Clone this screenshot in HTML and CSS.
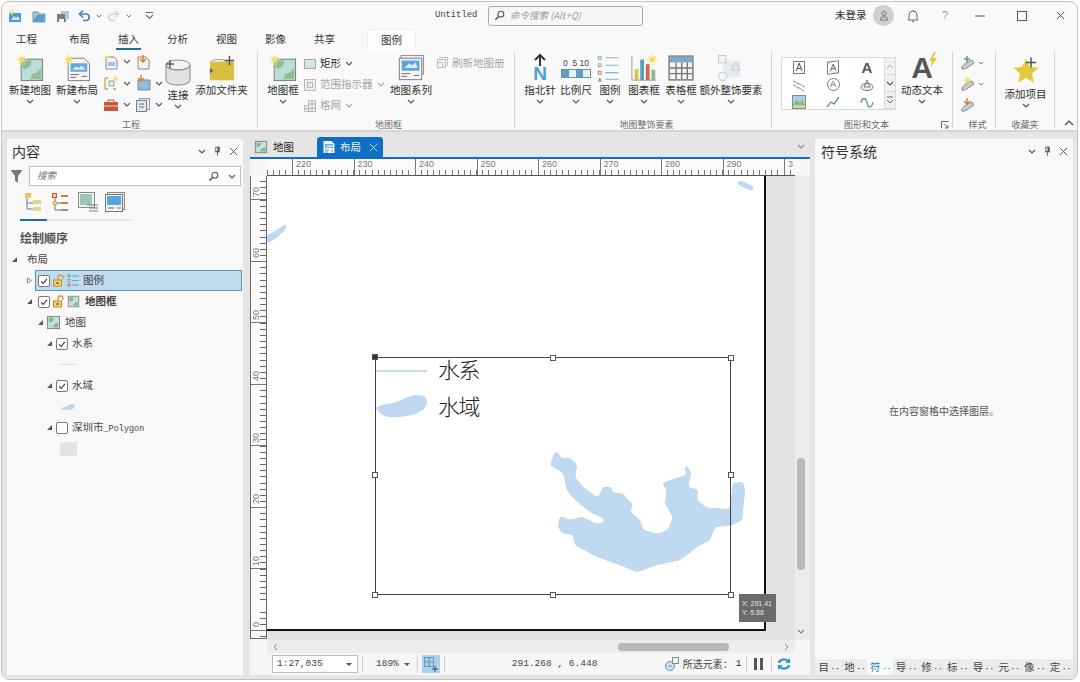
FILE: index.html
```html
<!DOCTYPE html>
<html lang="zh">
<head>
<meta charset="utf-8">
<title>Untitled</title>
<link rel="stylesheet" href="styles.css">
</head>
<body>
<svg class="sprite" xmlns="http://www.w3.org/2000/svg">
  <symbol id="sun" viewBox="0 0 12 12"><circle cx="6" cy="6" r="3.2" fill="#f3dc6c"/><path stroke="#f3dc6c" d="M6 0v2M6 10v2M0 6h2M10 6h2M2 2l1.5 1.5M8.500 8.500L10 10M10 2L8.500 3.500M2 10l1.500-1.500"/></symbol>
  <symbol id="map" viewBox="0 0 30 30"><rect x="5.500" y="5.500" width="23" height="23" fill="#bcdcd8" stroke="#777"/><path d="M7 7h10l-2 6-5 3-3-1zM27 15v12H15l3-6 4-1z" fill="#8fbe92"/><use href="#sun" x="0" y="0" width="12" height="12"/></symbol>
  <symbol id="mapflat" viewBox="0 0 16 16"><rect x="1.500" y="1.500" width="13" height="13" fill="#c4dfd8" stroke="#808080"/><path d="M3 3h5L7 7 3 8zM13 8v5H7l2-3z" fill="#82b68c"/></symbol>
  <symbol id="layout" viewBox="0 0 30 30"><path d="M5.500 4.500h17l6 6v18h-23z" fill="#f5f5f5" stroke="#777"/><path d="M8 10h18v9H8z" fill="#63a9dc"/><path d="M10 17l4-4 3 2 3-3 4 5z" fill="#d6ecf8"/><path d="M8 22h9M8 25h6M20 24h6" stroke="#666"/><use href="#sun" x="0" y="0" width="12" height="12"/></symbol>
  <symbol id="series" viewBox="0 0 30 30"><rect x="4.500" y="1.500" width="24" height="20" fill="#eee" stroke="#888"/><rect x="2.500" y="4.500" width="24" height="23" fill="#f6f6f6" stroke="#777"/><path d="M5 7h19v11H5z" fill="#5aa6dc"/><path d="M8 15l5-5 3 2 4-3 2 6z" fill="#d8eef9"/><path d="M5 21h9M5 24h6M18 23h6" stroke="#666"/></symbol>
  <symbol id="chev" viewBox="0 0 8 5"><path d="M1 1l3 3 3-3" fill="none" stroke="#555" stroke-width="1.100"/></symbol>
  <symbol id="tri" viewBox="0 0 7 7"><path d="M6 1v5H1z" fill="#555"/></symbol>
  <symbol id="check" viewBox="0 0 12 12"><path d="M2.500 6.500l2.500 2.500 4.500-5.500" fill="none" stroke="#333" stroke-width="1.300"/></symbol>
  <symbol id="lock" viewBox="0 0 13 13"><path d="M6 6V3.500a2.500 2.500 0 015 0V5" fill="none" stroke="#d89a3c" stroke-width="1.300"/><rect x="1.500" y="6" width="8" height="6" fill="#f4cf72" stroke="#c8862a"/><rect x="4.500" y="8" width="2" height="2" fill="#8a5a14"/></symbol>
  <symbol id="list" viewBox="0 0 13 13"><g fill="none" stroke="#6b9fc6"><rect x="1" y="1" width="2" height="2"/><rect x="1" y="5.500" width="2" height="2" stroke="#7cab7c"/><rect x="1" y="10" width="2" height="2" stroke="#c77"/><path d="M5 2h7M5 6.500h7M5 11h7"/></g></symbol>
  <symbol id="x" viewBox="0 0 10 10"><path d="M1 1l8 8M9 1l-8 8" stroke="currentColor" stroke-width="1.100" fill="none"/></symbol>
  <symbol id="pin" viewBox="0 0 8 11"><path d="M2 1h4v5H2zM1 6.500h6M4 7v4" stroke="#555" fill="none"/><path d="M4 1h2v5H4z" fill="#555"/></symbol>
  <symbol id="search" viewBox="0 0 12 12"><circle cx="7.500" cy="4.500" r="3.200" fill="none" stroke="#555" stroke-width="1.200"/><path d="M5 7l-3.500 3.500" stroke="#555" stroke-width="1.600"/></symbol>
  <symbol id="grid-t" viewBox="0 0 20 20"><rect x="1.500" y="1.500" width="17" height="17" fill="#f4f4f4" stroke="#777"/><path d="M2 2h16v4H2z" fill="#7fa8c9"/><path d="M2 10h16M2 14h16M6.500 6v12M10.500 6v12M14.500 6v12" stroke="#777"/></symbol>
</svg>

<div class="window">
  <header class="titlebar">
    <div class="qat">
      <svg class="qi" viewBox="0 0 14 14"><path d="M1 4h12v9H1z" fill="#4f9ad0"/><path d="M3 11l3-4 2 2 2-2 2 4z" fill="#cfe8f5"/><use href="#sun" x="0" y="0" width="7" height="7"/></svg>
      <svg class="qi q2" viewBox="0 0 14 14"><path d="M1 3h5l1 2h6v8H1z" fill="#a6c6dc" stroke="#6c93ae"/><path d="M3 9l2-3h8l-2 7H1z" fill="#5d9cc8"/></svg>
      <svg class="qi q3" viewBox="0 0 14 14"><path d="M1 5h9v8H1z" fill="#6f7f92"/><path d="M3 10h5v3H3z" fill="#f2f2f2"/><path d="M5 2h8v8H9V5H5z" fill="#a8c8df"/></svg>
      <svg class="qu" viewBox="0 0 13 13"><path d="M3 5h5.500a3.300 3.300 0 010 6.500H5" fill="none" stroke="#3f88bd" stroke-width="1.700"/><path d="M5 1.500L1.500 5 5 8.500" fill="none" stroke="#3f88bd" stroke-width="1.700"/></svg>
      <svg class="cv cv1"><use href="#chev"/></svg>
      <svg class="qu q5" viewBox="0 0 13 13"><path d="M10 5H4.500a3.300 3.300 0 000 6.500H8" fill="none" stroke="#c9d9e5" stroke-width="1.600"/><path d="M8 1.500L11.500 5 8 8.500" fill="none" stroke="#c9d9e5" stroke-width="1.600"/></svg>
      <svg class="cv cv2"><use href="#chev"/></svg>
      <svg class="qc" viewBox="0 0 9 9"><path d="M1 1.500h7M1 4l3.500 3.500L8 4" fill="none" stroke="#666" stroke-width="1.100"/></svg>
    </div>
    <span class="doc-name">Untitled</span>
    <div class="cmd-search">
      <svg class="cmd-ic"><use href="#search"/></svg>
      <span>命令搜索 (Alt+Q)</span>
    </div>
    <div class="title-right">
      <span class="login">未登录</span>
      <span class="avatar"><svg viewBox="0 0 10 11"><circle cx="5" cy="3.500" r="2" fill="none" stroke="#777"/><path d="M1.500 10V8.500c0-1 1-1.500 3.500-1.500s3.500.5 3.500 1.500V10z" fill="none" stroke="#777"/></svg></span>
      <svg class="bell" viewBox="0 0 12 14"><path d="M2 10V6a4 4 0 018 0v4l1 1H1zM6 1v1M5 12.500h2" fill="none" stroke="#666"/></svg>
      <span class="help">?</span>
      <svg class="wbtn wb1" viewBox="0 0 10 10"><path d="M0 5h10" stroke="#555"/></svg>
      <svg class="wbtn wb2" viewBox="0 0 10 10"><rect x=".5" y=".5" width="9" height="9" fill="none" stroke="#555"/></svg>
      <svg class="wbtn wb3"><use href="#x"/></svg>
    </div>
  </header>

  <nav class="tabs">
    <span class="tab first">工程</span><span class="tab">布局</span><span class="tab active">插入</span><span class="tab">分析</span><span class="tab">视图</span><span class="tab">影像</span><span class="tab">共享</span>
    <span class="tab ctx">图例</span>
  </nav>

  <section class="ribbon">
    <div class="group g1">
      <div class="gbody">
        <div class="big w50"><svg class="bi"><use href="#map"/></svg><span>新建地图</span><svg class="cv"><use href="#chev"/></svg></div>
        <div class="big w44"><svg class="bi"><use href="#layout"/></svg><span>新建布局</span><svg class="cv"><use href="#chev"/></svg></div>
        <div class="smallgrid">
          <div class="sg"><svg class="si" viewBox="0 0 16 16"><path d="M3 3h8l3 3v9H3z" fill="#f3f3f3" stroke="#888"/><path d="M5 8h7v4H5z" fill="#9cc6e2"/><use href="#sun" width="7" height="7"/></svg><svg class="cv"><use href="#chev"/></svg></div>
          <div class="sg"><svg class="si" viewBox="0 0 16 16"><path d="M3 3h8l3 3v9H3z" fill="#f1f1f1" stroke="#888"/><path d="M8 1v6M5 5l3 3 3-3" stroke="#d9822b" fill="none" stroke-width="1.500"/></svg></div>
          <div class="sg"><svg class="si" viewBox="0 0 16 16"><path d="M2 3h3M2 3v11M2 14h3M10 14h3" stroke="#c9a73a" fill="none" stroke-width="1.300"/><path d="M6 6h5v5H6z" fill="#e9f1f6" stroke="#7aa0bc"/><use href="#sun" x="9" y="0" width="7" height="7"/></svg><svg class="cv"><use href="#chev"/></svg></div>
          <div class="sg"><svg class="si" viewBox="0 0 16 16"><path d="M3 5h12v10H3z" fill="#8ebfe0" stroke="#888"/><path d="M6 0v6M3 3l3 3 3-3" stroke="#d9822b" fill="none" stroke-width="1.500"/></svg><svg class="cv"><use href="#chev"/></svg></div>
          <div class="sg"><svg class="si" viewBox="0 0 16 16"><path d="M1 5h14v9H1z" fill="#c8563a"/><path d="M5 5V3h6v2" fill="none" stroke="#a54"/><path d="M1 9h14" stroke="#f2d2c4"/></svg><svg class="cv"><use href="#chev"/></svg></div>
          <div class="sg"><svg class="si" viewBox="0 0 16 16"><rect x="4.500" y="1.500" width="10" height="11" fill="#eee" stroke="#8a97a2"/><rect x="1.500" y="3.500" width="10" height="11" fill="#dfe8ee" stroke="#75838e"/><path d="M4 7h5M4 10h5" stroke="#6a7a88"/></svg><svg class="cv"><use href="#chev"/></svg></div>
        </div>
        <div class="big w36 low"><svg class="bi bi-db" viewBox="0 0 28 28"><ellipse cx="14" cy="7" rx="12" ry="5" fill="#f5f5f5" stroke="#888"/><path d="M2 7v15c0 3 5 5 12 5s12-2 12-5V7c0 3-5 5-12 5S2 10 2 7z" fill="#e2e2e2" stroke="#888"/><path d="M6 2v8M2 6h8" stroke="#555" stroke-width="1.400"/></svg><span>连接</span><svg class="cv"><use href="#chev"/></svg></div>
        <div class="big w51"><svg class="bi" viewBox="0 0 30 30"><path d="M2 8h9c2-3 8-3 10 0h7v20H2z" fill="#d9bf3f"/><path d="M3 8c4-3 14-3 18 0" fill="#f5f5f5" stroke="#999"/><path d="M23 2v10M18 7h10" stroke="#555" stroke-width="1.600"/><path d="M2 15l4 3-4 3z" fill="#4a6a78"/></svg><span>添加文件夹</span></div>
      </div>
      <div class="glabel">工程</div>
    </div>

    <div class="group g2">
      <div class="gbody">
        <div class="big w40"><svg class="bi"><use href="#map"/></svg><span>地图框</span><svg class="cv"><use href="#chev"/></svg></div>
        <div class="smallcol">
          <div class="srow"><svg class="si2" viewBox="0 0 14 14"><rect x="1.500" y="2.500" width="11" height="9" fill="#d5e7d8" stroke="#888" stroke-dasharray="2 1"/></svg><span>矩形</span><svg class="cv"><use href="#chev"/></svg></div>
          <div class="srow off"><svg class="si2" viewBox="0 0 14 14"><rect x="1.500" y="1.500" width="11" height="11" fill="#ececec" stroke="#bbb"/><rect x="4.500" y="4.500" width="5" height="5" fill="none" stroke="#bbb"/></svg><span>范围指示器</span><svg class="cv"><use href="#chev"/></svg></div>
          <div class="srow off"><svg class="si2" viewBox="0 0 14 14"><path d="M1.500 12.500V6.500h4V1.500h7v11zM5.500 6.500v6M9 1.500v11M1.500 9.500h11M5.500 5h7" fill="#eee" stroke="#bbb"/></svg><span>格网</span><svg class="cv"><use href="#chev"/></svg></div>
        </div>
        <div class="big w42"><svg class="bi"><use href="#series"/></svg><span>地图系列</span><svg class="cv"><use href="#chev"/></svg></div>
        <div class="refresh"><svg class="si2" viewBox="0 0 14 14"><rect x="4.500" y="1.500" width="8" height="8" fill="#f2f2f2" stroke="#c4c4c4"/><rect x="2.500" y="3.500" width="8" height="8" fill="#f2f2f2" stroke="#c4c4c4"/><circle cx="5" cy="9" r="3" fill="#f4f4f4" stroke="#bbb"/></svg><span>刷新地图册</span></div>
      </div>
      <div class="glabel">地图框</div>
    </div>

    <div class="group g3">
      <div class="gbody">
        <div class="big w36"><div class="bi north"><svg viewBox="0 0 14 12"><path d="M7 12V2M2 6l5-5 5 5" fill="none" stroke="#333" stroke-width="2"/></svg><b>N</b></div><span>指北针</span><svg class="cv"><use href="#chev"/></svg></div>
        <div class="big w36"><div class="bi scale"><div class="scale-n">0&nbsp;&nbsp;5&nbsp;10</div><div class="scale-b"><i></i><i></i><i></i><i></i></div></div><span>比例尺</span><svg class="cv"><use href="#chev"/></svg></div>
        <div class="big w32"><svg class="bi" viewBox="0 0 30 30"><g fill="none"><rect x="2.500" y="2.500" width="3" height="3" stroke="#6aa7d0"/><rect x="2.500" y="10.500" width="3" height="3" stroke="#7fb27f"/><rect x="2.500" y="18.500" width="3" height="3" stroke="#d0705c"/><path d="M2.500 29l1.500-3 1.500 3z" stroke="#777"/><path d="M10 4h14M10 12h14M10 20h14M10 27h14" stroke="#7db4da" stroke-width="1.200"/></g></svg><span>图例</span><svg class="cv"><use href="#chev"/></svg></div>
        <div class="big w36"><svg class="bi" viewBox="0 0 30 30"><path d="M2 2v26h26" fill="none" stroke="#999"/><path d="M5 16h4v12H5z" fill="#d7c544"/><path d="M11 6h4v22h-4z" fill="#5b9dc9"/><path d="M17 11h4v17h-4z" fill="#c56a45"/><path d="M23 17h4v11h-4z" fill="#8ab98e"/><use href="#sun" x="18" y="0" width="12" height="12"/></svg><span>图表框</span><svg class="cv"><use href="#chev"/></svg></div>
        <div class="big w38"><svg class="bi"><use href="#grid-t"/></svg><span>表格框</span><svg class="cv"><use href="#chev"/></svg></div>
        <div class="big w62"><svg class="bi bi-ex" viewBox="0 0 30 30"><path d="M7 7h18v18H7z" fill="#e3ebf2"/><rect x="1.500" y="1.500" width="8" height="8" fill="#f4f4f4" stroke="#c4c4c4"/><circle cx="6" cy="24" r="4.500" fill="#f4f4f4" stroke="#c4c4c4"/><path d="M20 9l5 8H15z" fill="#e3ebf2" stroke="#c4c4c4"/></svg><span>额外整饰要素</span><svg class="cv"><use href="#chev"/></svg></div>
      </div>
      <div class="glabel">地图整饰要素</div>
    </div>

    <div class="group g4">
      <div class="gbody">
        <div class="gallery">
          <div class="gal-cells">
            <span class="gc"><b class="boxA">A</b></span>
            <span class="gc"><b class="boxA slant">A</b></span>
            <span class="gc"><b class="bigA">A</b></span>
            <span class="gc"><svg viewBox="0 0 14 14"><path d="M1 3c3 0 3 3 6 3s3 3 6 3M1 7c3 0 3 3 6 3s2 3 5 3" fill="none" stroke="#888"/></svg></span>
            <span class="gc"><b class="circA">A</b></span>
            <span class="gc"><svg viewBox="0 0 14 14"><ellipse cx="7" cy="9" rx="6" ry="3.500" fill="#f2efe4" stroke="#777"/><path d="M7 2L4 9h6z" fill="none" stroke="#777"/></svg></span>
            <span class="gc"><svg viewBox="0 0 14 14"><rect x=".5" y=".5" width="13" height="13" fill="#a6d0e8" stroke="#888"/><path d="M1 10l4-5 3 3 2-3 3 5z" fill="#88b77a"/><path d="M1 11h12v2H1z" fill="#e6d67a"/></svg></span>
            <span class="gc"><svg viewBox="0 0 14 14"><path d="M1 12l4-5 3 2 5-7" fill="none" stroke="#5e9f6e" stroke-width="1.300"/></svg></span>
            <span class="gc"><svg viewBox="0 0 14 14"><path d="M1 8c1-6 5-6 6 0s5 5 6-1" fill="none" stroke="#5e9f6e" stroke-width="1.300"/></svg></span>
          </div>
          <div class="gal-bar">
            <span class="gb"><svg viewBox="0 0 8 5"><path d="M1 4l3-3 3 3" fill="none" stroke="#aaa"/></svg></span>
            <span class="gb"><svg><use href="#chev"/></svg></span>
            <span class="gb"><svg viewBox="0 0 8 8"><path d="M1 1h6M1 4l3 3 3-3" fill="none" stroke="#666"/></svg></span>
          </div>
        </div>
        <div class="big w52"><div class="bi dyn"><b>A</b><svg viewBox="0 0 10 16"><path d="M6 0L1 9h3l-2 7 7-10H5l3-6z" fill="#e7c93d"/></svg></div><span>动态文本</span><svg class="cv"><use href="#chev"/></svg></div>
      </div>
      <div class="glabel">图形和文本<svg class="launcher" viewBox="0 0 8 8"><path d="M.5 7.500V.5h7M3 3l4 4M7 4v3H4" fill="none" stroke="#666"/></svg></div>
    </div>

    <div class="group g5">
      <div class="gbody stylecol">
        <div class="st"><svg class="si" viewBox="0 0 16 16"><path d="M2 14c-1-3 3-6 10-9l2 3c-6 4-9 7-12 6z" fill="#c5cdd4" stroke="#888"/><path d="M7 1v6M4 4h6" stroke="#5d9f5d" stroke-width="1.500"/></svg><svg class="cv"><use href="#chev"/></svg></div>
        <div class="st"><svg class="si" viewBox="0 0 16 16"><path d="M2 14c-1-3 3-6 10-9l2 3c-6 4-9 7-12 6z" fill="#c5cdd4" stroke="#888"/><use href="#sun" x="3" y="0" width="9" height="9"/></svg><svg class="cv"><use href="#chev"/></svg></div>
        <div class="st"><svg class="si" viewBox="0 0 16 16"><path d="M2 14c-1-3 3-6 10-9l2 3c-6 4-9 7-12 6z" fill="#c5cdd4" stroke="#888"/><path d="M7 1v6M4 4l3 3 3-3" stroke="#d9822b" stroke-width="1.500" fill="none"/></svg></div>
      </div>
      <div class="glabel">样式</div>
    </div>

    <div class="group g6">
      <div class="gbody">
        <div class="big w59 low"><svg class="bi bi-star" viewBox="0 0 30 30"><path d="M15 3l3.700 8.300 9 .9-6.800 6 2 8.800L15 22.400 7.100 27l2-8.800-6.800-6 9-.9z" fill="#e3c93f"/><path d="M20 2v10M15 7h10" stroke="#555" stroke-width="1.500"/></svg><span>添加项目</span><svg class="cv"><use href="#chev"/></svg></div>
      </div>
      <div class="glabel">收藏夹</div>
    </div>
    <svg class="collapse" viewBox="0 0 10 6"><path d="M1 5l4-4 4 4" fill="none" stroke="#444" stroke-width="1.200"/></svg>
  </section>

  <main class="dock">
    <aside class="panel left">
      <div class="phead"><span class="ptitle">内容</span><span class="pctl"><svg class="cv"><use href="#chev"/></svg><svg class="pn"><use href="#pin"/></svg><svg class="px"><use href="#x"/></svg></span></div>
      <div class="filter-row">
        <svg class="funnel" viewBox="0 0 13 14"><path d="M.5 1h12L8 7v6.500L5 12V7z" fill="#777"/></svg>
        <div class="sbox"><span>搜索</span><svg class="sic"><use href="#search"/></svg><svg class="cv"><use href="#chev"/></svg></div>
      </div>
      <div class="views">
        <svg viewBox="0 0 20 20"><path d="M3 6v11h6M3 11h6" stroke="#777" fill="none"/><path d="M1 1h6v5H1z" fill="#e6c85a"/><path d="M9 8h8v4H9zM9 15h8v4H9z" fill="#e6d68a"/></svg>
        <svg viewBox="0 0 20 20"><path d="M4 5v13h6M4 11h6" stroke="#777" fill="none"/><rect x="1.500" y="1.500" width="4" height="4" fill="#f2c4b4" stroke="#c9563a"/><circle cx="4" cy="11" r="2" fill="#f2dc9c" stroke="#c79a3a"/><path d="M10 4h7M10 11h7M10 18h7" stroke="#b78a4a" stroke-width="2"/></svg>
        <svg viewBox="0 0 20 20"><rect x=".5" y=".5" width="16" height="15" fill="#f2f2f2" stroke="#888"/><rect x="2" y="2" width="12" height="11" fill="#9dc7b4"/><path d="M9 13h11M11 16h9M11 19h9" stroke="#777"/></svg>
        <svg viewBox="0 0 20 20"><rect x="2.500" y=".5" width="17" height="17" fill="#eee" stroke="#888"/><rect x=".5" y="2.500" width="17" height="17" fill="#f4f4f4" stroke="#777"/><rect x="2" y="4" width="14" height="9" fill="#5aa6dc"/><path d="M3 16h6M12 16h4" stroke="#666"/></svg>
      </div>
      <div class="views-ul"><i></i></div>
      <h3 class="order">绘制顺序</h3>
      <ul class="tree">
        <li class="node"><svg class="tw"><use href="#tri"/></svg><span>布局</span></li>
        <li class="node lv1 sel"><svg class="tw open" viewBox="0 0 7 7"><path d="M1.500 1l4 2.500-4 2.500z" fill="none" stroke="#888"/></svg><span class="cb"><svg><use href="#check"/></svg></span><svg class="lk"><use href="#lock"/></svg><svg class="lg"><use href="#list"/></svg><span class="t1">图例</span></li>
        <li class="node lv1"><svg class="tw"><use href="#tri"/></svg><span class="cb"><svg><use href="#check"/></svg></span><svg class="lk"><use href="#lock"/></svg><svg class="lg"><use href="#mapflat"/></svg><span class="t1 bold">地图框</span></li>
        <li class="node lv2"><svg class="tw"><use href="#tri"/></svg><svg class="mp"><use href="#mapflat"/></svg><span>地图</span></li>
        <li class="node lv3"><svg class="tw"><use href="#tri"/></svg><span class="cb"><svg><use href="#check"/></svg></span><span>水系</span></li>
        <li class="node sym"><i class="sym-line"></i></li>
        <li class="node lv3"><svg class="tw"><use href="#tri"/></svg><span class="cb"><svg><use href="#check"/></svg></span><span>水域</span></li>
        <li class="node sym"><svg class="sym-poly" viewBox="0 0 16 8"><path d="M1 5c3-1 5-1 8-3 3-2 6-1 6 1s-3 4-7 4-6 0-7-2z" fill="#bcd8ef"/></svg></li>
        <li class="node lv3"><svg class="tw"><use href="#tri"/></svg><span class="cb"></span><span>深圳市<span class="mono">_Polygon</span></span></li>
        <li class="node sym"><i class="sym-box"></i></li>
      </ul>
    </aside>

    <section class="center">
      <div class="vtabs">
        <span class="vtab"><svg><use href="#mapflat"/></svg>地图</span>
        <span class="vtab on"><svg viewBox="0 0 14 14"><path d="M1.500 1h8l3 3v9h-11z" fill="#f2f7fb"/><path d="M3 4h8v4H3z" fill="#6aaee0"/><path d="M4 7l2-2 2 1 2-1 1 2z" fill="#d8eef9"/><path d="M3 10h4M3 12h3M9 11h2" stroke="#5a8fb8"/></svg><span>布局</span><svg class="vx"><use href="#x"/></svg></span>
        <svg class="cv vtchev"><use href="#chev"/></svg>
      </div>
      <div class="hruler">
        <span class="rc">220</span><span class="rc">230</span><span class="rc">240</span><span class="rc">250</span><span class="rc">260</span><span class="rc">270</span><span class="rc">280</span><span class="rc">290</span><span class="rc">3</span>
      </div>
      <div class="canvas-row">
        <div class="vruler">
          <span class="vc first"><b>70</b></span><span class="vc"><b>60</b></span><span class="vc"><b>50</b></span><span class="vc"><b>40</b></span><span class="vc"><b>30</b></span><span class="vc"><b>20</b></span><span class="vc"><b>10</b></span><span class="vc"><b>0</b></span><span class="vc end"></span>
        </div>
        <div class="view">
          <div class="page">
            <svg class="water" viewBox="267 176 497 453" xmlns="http://www.w3.org/2000/svg">
              <defs><filter id="smooth" x="-5%" y="-5%" width="110%" height="110%"><feGaussianBlur stdDeviation="1.500"/><feComponentTransfer><feFuncA type="linear" slope="6" intercept="-2.200"/></feComponentTransfer></filter></defs>
              <g filter="url(#smooth)">
              <path fill="#bfd9f1" d="M555 452L559 453 560 458 570 458 577 465 575 477 583 487 598 498 603 487 611 487 613 493 622 493 633 505 630 512 640 520 643 530 657 534 668 530 673 517 665 503 667 490 662 483 680 477 687 475 684 466 688 467 691 473 688 487 698 490 697 500 707 508 730 509 733 483 743 482 745 490 742 520 732 525 715 527 710 540 697 547 680 560 657 565 637 572 620 565 597 557 575 545 573 535 562 533 558 527 560 516 570 520 582 517 597 524 605 522 603 518 590 512 573 498 567 490 563 473 550 465z"/>
              <path fill="#bfd9f1" d="M267 236L280 228 287 223 285 230 276 238 267 244z"/>
              <path fill="#bfd9f1" d="M735 183L742 181 748 184 753 186 753 191 745 188z"/>
              </g>
            </svg>
            <div class="legend-frame">
              <i class="h tl"></i><i class="h tc"></i><i class="h tr"></i><i class="h ml"></i><i class="h mr"></i><i class="h bl"></i><i class="h bc"></i><i class="h br"></i>
              <div class="leg-row"><i class="leg-line"></i><span>水系</span></div>
              <div class="leg-row r2"><svg class="leg-poly" viewBox="0 0 52 26"><path d="M0 14c5-4 13-4 20-6 7-2 12-7 22-7 6 0 9 3 9 7 0 6-7 12-20 14C17 24 6 25 0 14z" fill="#bfd9f1"/></svg><span>水域</span></div>
            </div>
          </div>
          <div class="coordtip">X: 291.41<br>Y: 5.88</div>
        </div>
        <div class="vscroll"><i></i><svg class="cv"><use href="#chev"/></svg></div>
      </div>
      <div class="hscroll"><svg class="hl" viewBox="0 0 5 8"><path d="M4 1L1 4l3 3" fill="none" stroke="#888"/></svg><i></i><svg class="hr" viewBox="0 0 5 8"><path d="M1 1l3 3-3 3" fill="none" stroke="#888"/></svg></div>
      <div class="status">
        <div class="scale-in"><span>1:27,035</span><em></em></div>
        <u class="sep"></u>
        <span class="zoom-v">189%</span><em class="caret"></em>
        <u class="sep"></u>
        <span class="snap"><svg viewBox="0 0 16 16"><path d="M1.500 1.500h9v9h-9zM6 1.500v9M1.500 6h9" fill="none" stroke="#6a93b4"/><path d="M12 10v6M9 13h6" stroke="#444"/></svg></span>
        <u class="sep"></u>
        <span class="coords">291.268 , 6.448</span>
        <svg class="seli" viewBox="0 0 16 16"><circle cx="6" cy="10" r="4.500" fill="#cfe3f2" stroke="#5a93bf"/><rect x="8.500" y="1.500" width="6" height="6" fill="#eef2f5" stroke="#888"/><path d="M4 10h4" stroke="#5a93bf"/></svg>
        <span class="selt">所选元素：</span><span class="seln">1</span>
        <u class="sep s2"></u>
        <span class="pause"><i></i><i></i></span>
        <u class="sep s3"></u>
        <svg class="refr" viewBox="0 0 14 14"><path d="M1 6c0-3 3-4.500 6-4.500 2 0 3 .5 4 1.500L13 1v5H8l2-1.500C9 3.800 8 3.500 7 3.500 5 3.500 3.500 4.500 3 6zM13 8c0 3-3 4.500-6 4.500-2 0-3-.5-4-1.500l-2 2V8h5l-2 1.500c1 .7 2 1 3 1 2 0 3.500-1 4-2.500z" fill="#2f8fd0"/></svg>
      </div>
    </section>

    <aside class="panel right">
      <div class="phead"><span class="ptitle">符号系统</span><span class="pctl"><svg class="cv"><use href="#chev"/></svg><svg class="pn"><use href="#pin"/></svg><svg class="px"><use href="#x"/></svg></span></div>
      <div class="pempty">在内容窗格中选择图层。</div>
      <div class="ptabs">
        <span>目<small>··</small></span><span>地<small>··</small></span><span class="act">符<small>··</small></span><span>导<small>··</small></span><span>修<small>··</small></span><span>标<small>··</small></span><span>导<small>··</small></span><span>元<small>··</small></span><span>像<small>··</small></span><span>定<small>··</small></span>
      </div>
    </aside>
  </main>
</div>
</body>
</html>
```
FILE: styles.css
```css
* { box-sizing: border-box; }
html, body { margin: 0; padding: 0; height: 100%; background: #fff; overflow: hidden; }
body { font-family: "Noto Sans CJK SC", "Liberation Sans", sans-serif; font-size: 10.500px; color: #2e2e2e; line-height: 1; }
.sprite { display: none; }
svg { display: block; overflow: visible; }
.cv { width: 8px; height: 5px; flex: none; }

.window { margin: 1px 0 0 1px; width: 1077px; height: 679px; border: 1px solid #c4c4c4; border-radius: 8px; background: #f9f9f9; display: flex; flex-direction: column; overflow: hidden; }

/* title bar */
.titlebar { height: 27px; flex: none; display: flex; align-items: center; padding-left: 6px; }
.qat { display: flex; align-items: center; width: 427px; }
.qi { width: 14px; height: 14px; }
.q2 { margin-left: 10px; }
.q3 { margin-left: 10px; }
.qu { width: 13px; height: 13px; margin-left: 8px; }
.q5 { margin-left: 5px; }
.qat .cv1 { margin-left: 5px; width: 6px; height: 4px; }
.qat .cv2 { margin-left: 6px; width: 6px; height: 4px; }
.qc { width: 9px; height: 9px; margin-left: 13px; }
.doc-name { font-family: "Liberation Mono", monospace; font-size: 8.800px; color: #444; width: 53px; }
.cmd-search { width: 155px; height: 20px; border: 1px solid #a9a9a9; border-radius: 3px; background: #f7f7f7; display: flex; align-items: center; padding-left: 5px; font-size: 9.500px; font-style: italic; color: #9a9a9a; }
.cmd-ic { width: 11px; height: 11px; margin-right: 5px; }
.title-right { display: flex; align-items: center; margin-left: 192px; flex: 1; }
.login { font-size: 10.500px; width: 38px; }
.avatar { width: 21px; height: 21px; border-radius: 50%; background: #cfcfcf; display: flex; align-items: center; justify-content: center; }
.avatar svg { width: 10px; height: 11px; }
.bell { width: 12px; height: 14px; margin-left: 13px; }
.help { margin-left: 23px; width: 10px; color: #999; font-size: 11px; font-family: "Liberation Sans", sans-serif; }
.wbtn { width: 10px; height: 10px; flex: none; color: #555; }
.wb1 { margin-left: 23px; }
.wb2 { margin-left: 32px; }
.wb3 { margin-left: 29px; width: 9px; height: 9px; }

/* tabs */
.tabs { height: 21px; flex: none; display: flex; }
.tab { width: 49px; text-align: center; font-size: 10.500px; line-height: 19px; position: relative; color: #333; }
.tab.first { margin-right: 4px; }
.tab.active::after { content: ""; position: absolute; left: 12px; right: 12px; bottom: 0; height: 2px; background: #1a6da8; }
.ctx { margin-left: 18px; width: 49px; background: #fdfdfd; border: 1px solid #ececec; border-bottom: 0; border-radius: 3px 3px 0 0; }

/* ribbon */
.ribbon { height: 82px; flex: none; display: flex; padding-left: 3px; border-bottom: 2px solid #d6d6d6; position: relative; }
.group { display: flex; flex-direction: column; border-right: 1px solid #d4d4d4; margin: 2px 0 2px; height: 76px; flex: none; }
.gbody { height: 67px; flex: none; display: flex; align-items: flex-start; padding-top: 2px; }
.glabel { height: 9px; font-size: 9px; line-height: 11px; text-align: center; color: #6a6a6a; position: relative; }
.g1 { width: 253px; }
.g2 { width: 257px; padding-left: 5px; }
.g3 { width: 257px; padding-left: 7px; }
.g4 { width: 181px; padding-left: 9px; }
.g5 { width: 43px; padding-left: 7px; }
.g6 { width: 59px; }
.big { display: flex; flex-direction: column; align-items: center; flex: none; white-space: nowrap; }
.big > span { line-height: 16px; height: 16px; }
.big .cv { margin-top: 1px; }
.bi { width: 30px; height: 28px; flex: none; }
.low .bi { height: 32px; }
.low .bi-db { width: 28px; height: 30px; margin-top: 3px; }
.w50 { width: 50px; } .w44 { width: 44px; } .w36 { width: 36px; } .w51 { width: 51px; } .w40 { width: 40px; } .w42 { width: 42px; } .w32 { width: 32px; } .w38 { width: 38px; } .w62 { width: 62px; } .w52 { width: 52px; } .w59 { width: 59px; }
.smallgrid { width: 61px; margin-top: -3px; display: grid; grid-template-columns: 32px 29px; grid-auto-rows: 21.500px; padding-left: 4px; }
.sg { display: flex; align-items: center; gap: 4px; }
.si { width: 16px; height: 16px; flex: none; }
.si2 { width: 14px; height: 14px; flex: none; }
.smallcol { width: 87px; margin-top: -1px; display: flex; flex-direction: column; }
.srow { height: 21px; display: flex; align-items: center; gap: 3px; white-space: nowrap; }
.srow .cv { margin-left: 1px; }
.off { color: #a6a6a6; }
.off .cv { opacity: .5; }
.refresh { display: flex; align-items: center; gap: 3px; color: #a6a6a6; height: 16px; margin: 1px 0 0 3px; white-space: nowrap; }
.north { display: flex; flex-direction: column; align-items: center; justify-content: flex-start; }
.north svg { width: 14px; height: 12px; }
.north b { font-family: "Liberation Sans", sans-serif; font-size: 19px; line-height: 16px; color: #4e9ed4; }
.scale { width: 30px; padding-top: 5px; }
.scale-n { font-family: "Liberation Sans", sans-serif; font-size: 8.500px; line-height: 9px; white-space: nowrap; text-align: center; color: #444; }
.scale-b { display: flex; height: 9px; margin-top: 1px; border: 1px solid #6a8ea8; }
.scale-b i { flex: 1; background: #5f9cc7; }
.scale-b i:nth-child(even) { background: #e6f0f6; }

.gallery { width: 115px; height: 53px; margin-top: 3px; display: flex; border: 1px solid #d9d9d9; background: #fff; flex: none; }
.gal-cells { flex: 1; display: grid; grid-template-columns: repeat(3, 34px); grid-auto-rows: 17px; padding-top: 1px; }
.gc { display: flex; align-items: center; justify-content: center; font-family: "Liberation Sans", sans-serif; }
.gc svg { width: 14px; height: 14px; }
.gc b { font-weight: 400; color: #555; }
.boxA { border: 1px solid #777; width: 12px; height: 13px; line-height: 11px; font-size: 10px; text-align: center; }
.slant { transform: skewY(-8deg); }
.bigA { font-size: 15px; font-weight: 700 !important; }
.circA { border: 1px solid #777; border-radius: 50%; width: 13px; height: 13px; line-height: 11px; font-size: 9px; text-align: center; }
.gal-bar { width: 13px; display: flex; flex-direction: column; border-left: 1px solid #d9d9d9; background: #f0f0f0; }
.gb { flex: 1; display: flex; align-items: center; justify-content: center; border-bottom: 1px solid #d9d9d9; }
.gb svg { width: 8px; height: 5px; }
.gb:last-child svg { height: 8px; }
.dyn { position: relative; width: 30px; height: 28px; }
.dyn b { font-family: "Liberation Sans", sans-serif; font-size: 30px; line-height: 28px; color: #555; display: block; text-align: center; }
.dyn svg { position: absolute; right: -1px; top: -2px; width: 10px; height: 16px; }
.launcher { position: absolute; right: 3px; top: 2px; width: 8px; height: 8px; }

.stylecol { flex-direction: column; padding-top: 0; }
.st { height: 21px; display: flex; align-items: center; gap: 2px; }
.st .cv { width: 6px; height: 4px; }
.low .bi-star { width: 30px; height: 31px; margin-top: 1px; }
.collapse { position: absolute; left: 1062px; top: 70px; width: 10px; height: 6px; }

/* dock */
.dock { flex: 1; min-height: 0; display: flex; background: #e5e5e5; padding: 0 4px 4px 5px; gap: 7px; }
.panel { background: #f8f8f8; margin-top: 7px; display: flex; flex-direction: column; flex: none; }
.left { width: 236px; }
.right { width: 258px; margin-left: -2px; }
.phead { height: 24px; display: flex; align-items: center; justify-content: space-between; padding: 0 5px; flex: none; }
.ptitle { font-size: 14px; color: #333; }
.pctl { display: flex; align-items: center; gap: 8px; }
.pn { width: 7px; height: 10px; }
.px { width: 9px; height: 9px; color: #555; }

.filter-row { display: flex; align-items: center; height: 22px; margin-top: 2px; padding-left: 3px; gap: 6px; }
.funnel { width: 13px; height: 14px; }
.sbox { width: 212px; height: 20px; border: 1px solid #bdbdbd; background: #fff; display: flex; align-items: center; padding: 0 4px 0 7px; font-size: 9.500px; font-style: italic; color: #777; }
.sbox span { flex: 1; }
.sic { width: 11px; height: 11px; margin-right: 9px; }
.views { display: flex; margin: 5px 0 0 17px; height: 22px; }
.views svg { width: 20px; height: 20px; margin-right: 7px; }
.views-ul { margin: 5px 0 0 13px; width: 111px; height: 2px; background: #e6e6e6; }
.views-ul i { display: block; width: 27px; height: 2px; background: #1a6da8; }
.order { margin: 9px 0 0 13px; font-size: 12px; line-height: 16px; font-weight: 700; color: #555; }
.tree { list-style: none; margin: 3px 0 0; padding: 0; }
.node { height: 21px; display: flex; align-items: center; padding-left: 4px; position: relative; color: #444; }
.tw { width: 7px; height: 7px; margin-right: 9px; flex: none; }
.lv1 { padding-left: 19px; }
.lv1 .tw { margin-right: 5px; }
.lv2 { padding-left: 30px; }
.lv2 .tw { margin-right: 2px; }
.lv3 { padding-left: 39px; }
.lv3 .tw { margin-right: 3px; }
.sel { background: #c0daee; border: 1px solid #5a93bf; margin-left: 28px; padding-left: 0; height: 21px; width: 207px; margin-right: 0; }
.sel .tw { position: absolute; left: -10px; top: 6px; margin: 0; }
.sel .cb { margin-left: 2px; }
.cb { width: 12px; height: 12px; border: 1px solid #777; border-radius: 2px; background: #fff; margin-right: 4px; flex: none; display: block; }
.lv1 .cb { margin-right: 2px; }
.cb svg { width: 10px; height: 10px; }
.lk { width: 13px; height: 13px; margin-right: 2px; flex: none; }
.lg { width: 13px; height: 13px; margin-right: 3px; flex: none; }
.mp { width: 15px; height: 15px; margin-right: 4px; flex: none; }
.bold { font-weight: 700; margin-left: 2px; }
.mono { font-family: "Liberation Mono", monospace; font-size: 8.500px; }
.sym { padding-left: 53px; }
.sym-line { display: block; width: 16px; height: 1px; background: #cfe0ee; }
.sym-poly { width: 16px; height: 8px; }
.sym-box { display: block; width: 17px; height: 14px; background: #e4e4e4; }

/* center */
.center { width: 560px; margin-top: 3px; display: flex; flex-direction: column; flex: none; background: #f6f6f6; }
.vtabs { height: 24px; flex: none; display: flex; align-items: flex-end; border-bottom: 2px solid #0f6fc6; background: #e5e5e5; position: relative; }
.vtab { height: 20px; display: flex; align-items: center; padding: 0 4px; gap: 5px; font-size: 10.500px; color: #222; margin-right: 19px; white-space: nowrap; }
.vtab svg { width: 14px; height: 14px; flex: none; }
.vtab.on { background: #0f6fc6; color: #e9f3fb; border-radius: 3px 3px 0 0; margin: 0; padding: 0 0 0 5px; gap: 4px; width: 66px; }
.vtab .vx { margin-left: 4px; width: 9px; height: 9px; color: #bcd9f0; }
.vtchev { position: absolute; right: 5px; top: 9px; opacity: .6; }
.hruler { height: 17px; flex: none; margin-left: 17px; padding-left: 25px; display: flex; background: #fbfbfb; border-bottom: 1px solid #555; width: 528px; overflow: hidden;
  background-image: repeating-linear-gradient(90deg, #777 0 1px, transparent 1px 6.150px); background-size: 100% 5px; background-repeat: no-repeat; background-position: 0 100%; }
.rc { flex: 0 0 61.500px; border-left: 1px solid #777; padding: 1px 0 0 3px; font-family: "Liberation Sans", sans-serif; font-size: 9px; line-height: 9px; color: #777; }
.canvas-row { flex: 1; min-height: 0; display: flex; }
.vruler { width: 17px; flex: none; height: 463px; display: flex; flex-direction: column; background: #fbfbfb; border-left: 1px solid #666; border-right: 1px solid #666; border-bottom: 1px solid #666;
  background-image: repeating-linear-gradient(180deg, transparent 0 5.150px, #666 5.150px 6.150px); background-size: 6px 100%; background-repeat: no-repeat; background-position: 100% 0; }
.vc { flex: 0 0 61.500px; border-bottom: 1px solid #777; position: relative; }
.vc.first { flex-basis: 24px; }
.vc.end { border-bottom: 0; flex: 0 0 7px; }
.vc b { position: absolute; left: 1px; bottom: 2px; font-weight: 400; font-family: "Liberation Sans", sans-serif; font-size: 9px; line-height: 8px; color: #777; writing-mode: vertical-rl; transform: rotate(180deg); }
.view { flex: 1; position: relative; background: #e3e3e3; overflow: visible; height: 464px; }
.page { position: absolute; left: 0; top: 0; width: 499px; height: 455px; background: #fff; border-right: 2px solid #111; border-bottom: 2px solid #111; }
.water { position: absolute; left: 0; top: 0; width: 497px; height: 453px; }
.legend-frame { position: absolute; left: 108px; top: 181px; width: 356px; height: 238px; border: 1px solid #444; }
.h { position: absolute; width: 6px; height: 6px; background: #fff; border: 1px solid #555; }
.tl { left: -4px; top: -4px; background: #333; }
.tc { left: 174px; top: -3px; } .tr { right: -4px; top: -3px; }
.ml { left: -4px; top: 114px; } .mr { right: -4px; top: 114px; }
.bl { left: -4px; bottom: -4px; } .bc { left: 174px; bottom: -4px; } .br { right: -4px; bottom: -4px; }
.leg-row { display: flex; align-items: center; height: 20px; margin-top: 0; font-size: 22px; font-weight: 300; color: #222; }
.leg-row span { letter-spacing: -1.500px; margin-left: 62px; }
.leg-line { width: 51px; height: 2px; background: #c5dceb; position: absolute; left: 0; top: 12px; }
.leg-poly { position: absolute; left: 0; top: 36px; width: 52px; height: 26px; }
.r2 { margin-top: 17px; }
.coordtip { position: absolute; left: 472px; top: 418px; width: 37px; height: 28px; background: #6b6b6b; color: #e4e4e4; font-family: "Liberation Sans", sans-serif; font-size: 7px; line-height: 9px; padding: 5px 0 0 3px; z-index: 2; }
.vscroll { width: 15px; flex: none; position: relative; background: #ececec; height: 464px; }
.vscroll i { position: absolute; left: 2px; top: 282px; width: 8px; height: 112px; background: #b8b8b8; border-radius: 4px; }
.vscroll .cv { position: absolute; left: 2px; top: 453px; opacity: .7; }
.hscroll { height: 13px; flex: none; position: relative; background: #ececec; margin-left: 17px; margin-right: 15px; }
.hscroll i { position: absolute; left: 351px; top: 3px; width: 111px; height: 8px; background: #b8b8b8; border-radius: 4px; }
.hl { position: absolute; left: 6px; top: 3px; width: 5px; height: 8px; }
.hr { position: absolute; right: 6px; top: 3px; width: 5px; height: 8px; }
.status { height: 22px; flex: none; display: flex; align-items: center; padding-left: 22px; background: #f6f6f6; font-size: 10px; }
.scale-in { width: 86px; height: 18px; border: 1px solid #bdbdbd; background: #fff; display: flex; align-items: center; justify-content: space-between; padding: 0 5px 0 4px; font-family: "Liberation Mono", monospace; font-size: 9.500px; color: #444; }
.scale-in em, .caret { display: block; width: 0; height: 0; border: 3px solid transparent; border-top: 3px solid #555; border-bottom: 0; }
.sep { display: block; width: 1px; height: 14px; background: #c8c8c8; margin-left: 4px; flex: none; text-decoration: none; }
.zoom-v { font-family: "Liberation Mono", monospace; font-size: 9.500px; margin-left: 13px; color: #444; }
.caret { margin-left: 5px; }
.status .caret + .sep { margin-left: 7px; }
.snap { width: 18px; height: 18px; background: #a8d4ef; margin-left: 4px; display: flex; align-items: center; justify-content: center; flex: none; }
.snap svg { width: 16px; height: 16px; }
.snap + .sep { margin-left: 4px; }
.coords { font-family: "Liberation Mono", monospace; font-size: 9.500px; color: #444; margin-left: 67px; width: 83px; white-space: pre; }
.seli { width: 16px; height: 16px; margin-left: 69px; flex: none; }
.selt { margin-left: 3px; width: 52px; white-space: nowrap; color: #444; }
.seln { font-family: "Liberation Mono", monospace; font-size: 9.500px; margin-left: 1px; width: 8px; }
.sep.s2 { margin-left: 2px; }
.pause { display: flex; gap: 3px; margin-left: 7px; }
.pause i { display: block; width: 3px; height: 12px; background: #555; }
.sep.s3 { margin-left: 8px; }
.refr { width: 14px; height: 14px; margin-left: 5px; flex: none; }

/* right */
.right .phead { padding-left: 6px; }
.pempty { flex: 1; display: flex; align-items: center; justify-content: center; font-size: 10px; color: #555; padding-bottom: 1px; }
.ptabs { height: 16px; flex: none; display: flex; background: #ececec; padding-left: 1px; align-items: center; }
.ptabs span { width: 25.700px; height: 16px; line-height: 16px; text-align: center; font-size: 10.500px; color: #444; white-space: nowrap; }
.ptabs small { font-size: 6px; letter-spacing: -1.500px; margin-left: 1px; }
.ptabs .act { color: #1a84c6; background: #fafafa; }
```
